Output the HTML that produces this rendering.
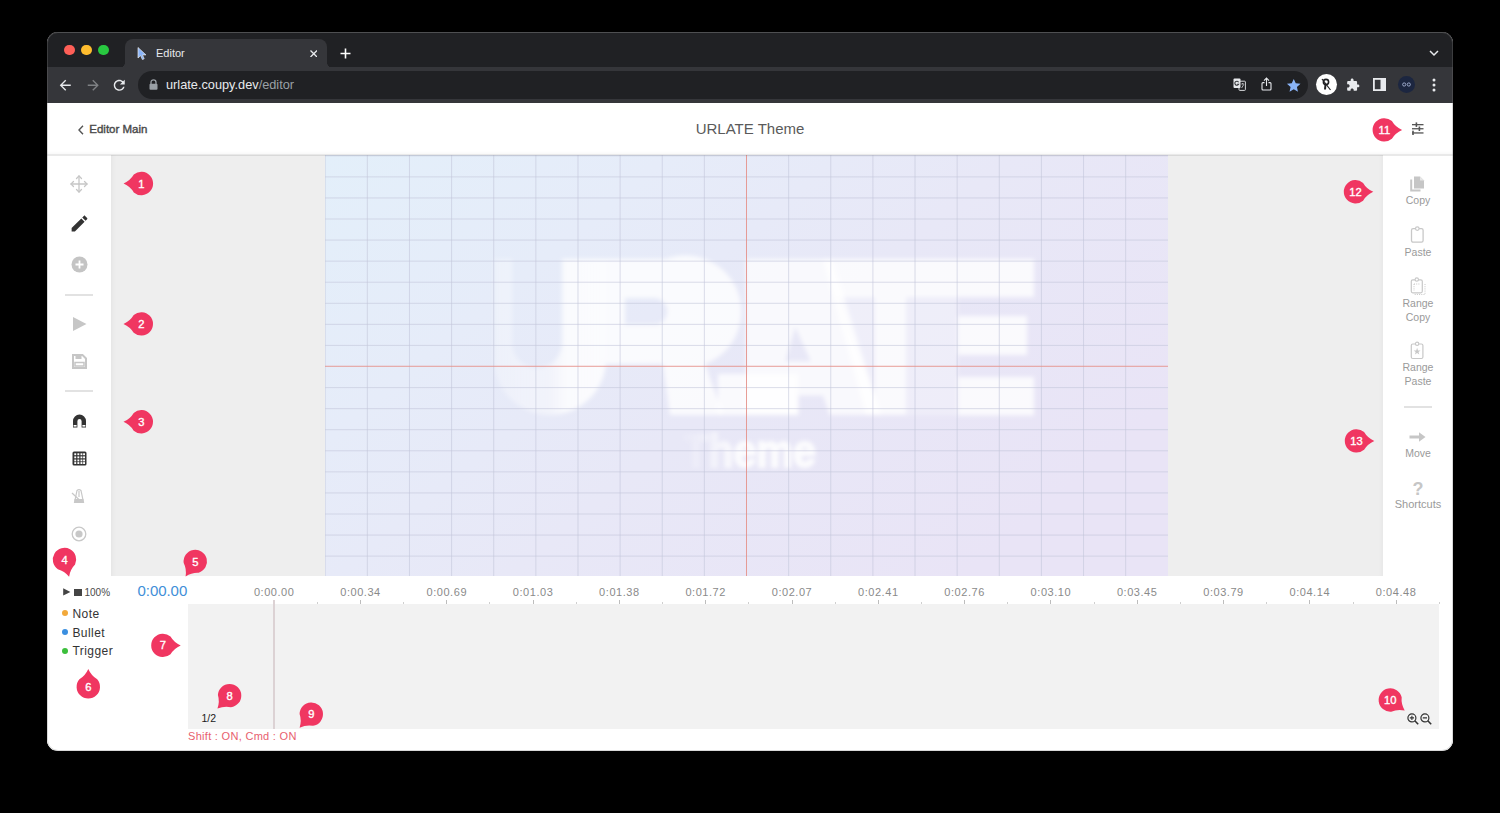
<!DOCTYPE html>
<html><head><meta charset="utf-8">
<style>
*{margin:0;padding:0;box-sizing:border-box}
html,body{width:1500px;height:813px;background:#000;overflow:hidden;font-family:"Liberation Sans",sans-serif}
.abs{position:absolute}
#win{position:absolute;left:47px;top:32px;width:1406px;height:718.5px;border-radius:11px;overflow:hidden;background:#fff}
#titlebar{position:absolute;left:0;top:0;width:1406px;height:35px;background:#202124}
#tab{position:absolute;left:78px;top:7px;width:202px;height:30px;background:#35363a;border-radius:8px 8px 0 0}
#toolbar{position:absolute;left:0;top:35px;width:1406px;height:36px;background:#35363a}
#omni{position:absolute;left:91px;top:4px;width:1170px;height:28px;border-radius:14px;background:#202124}
#header{position:absolute;left:0;top:71px;width:1406px;height:52px;background:#fff}
#lefttb{position:absolute;left:0;top:123px;width:64px;height:421px;background:#fff;z-index:2}
#stage{position:absolute;left:64px;top:123px;width:1272px;height:421px;z-index:2;background:#eeeeee;box-shadow:inset 5px 0 5px -4px rgba(0,0,0,0.05), inset -5px 0 5px -4px rgba(0,0,0,0.04)}
#canvas{position:absolute;left:214px;top:0;width:843px;height:421px;overflow:hidden;
  background:linear-gradient(90deg,#e4eef9 0%,#e7e9f7 50%,#e9e5f6 100%)}
#righttb{position:absolute;left:1336px;top:123px;width:70px;height:421px;background:#fff;z-index:2}
#timeline{position:absolute;left:0;top:543px;width:1406px;height:175px;background:#fff}
.tl{width:10.8px;height:10.8px;border-radius:50%}
.flare{position:absolute;bottom:0;width:8px;height:8px}
.flare.l{left:-8px;background:radial-gradient(circle at 0 0,transparent 8px,#35363a 8.5px)}
.flare.r{right:-8px;background:radial-gradient(circle at 100% 0,transparent 8px,#35363a 8.5px)}
.lbl{position:absolute;left:0;width:70px;text-align:center;font-size:10.5px;line-height:13px;color:#9a9a9a;white-space:nowrap}
.rl{position:absolute;top:11px;width:60px;text-align:center;font-size:11px;line-height:12px;color:#8a8a8a;letter-spacing:0.55px;white-space:nowrap}
.dot{width:6px;height:6px;border-radius:50%}
.leg{position:absolute;left:25.4px;font-size:12px;line-height:14px;color:#333;letter-spacing:0.45px}
.mk{position:absolute;width:23px;height:23px}
.mk i{position:absolute;left:0;top:0;width:23px;height:23px;background:#ee3860;border-radius:50% 50% 50% 0}
.mk b{position:absolute;left:0;top:0;width:23px;height:23px;line-height:23px;text-align:center;color:#fff;font-size:13px;font-weight:normal}
</style></head><body>
<div id="win">
  <div id="titlebar">
    <div class="abs" style="left:0;top:0;width:1406px;height:1px;background:#3a3b3e"></div>
    <div class="abs tl" style="left:17.3px;top:12.7px;background:#fe5f57"></div>
    <div class="abs tl" style="left:34.2px;top:12.7px;background:#febc2e"></div>
    <div class="abs tl" style="left:51px;top:12.7px;background:#28c840"></div>
    <div id="tab">
      <div class="flare l"></div><div class="flare r"></div>
      <svg class="abs" style="left:12px;top:8px" width="10" height="13" viewBox="0 0 10 13"><path d="M1 0.5 L1 11 L3.6 8.6 L5.4 12.6 L7.2 11.8 L5.5 7.9 L9 7.9 Z" fill="#8ab4f8" stroke="#e8eaed" stroke-width="0.7"/></svg>
      <div class="abs" style="left:31px;top:7px;font-size:11px;line-height:14px;color:#e8eaed">Editor</div>
      <svg class="abs" style="left:184.6px;top:10.5px" width="7.5" height="7.5" viewBox="0 0 7.5 7.5"><path d="M0.5 0.5 L7 7 M7 0.5 L0.5 7" stroke="#e8eaed" stroke-width="1.3"/></svg>
    </div>
    <svg class="abs" style="left:292.8px;top:15.8px" width="11" height="11" viewBox="0 0 11 11"><path d="M5.5 0.5 V10.5 M0.5 5.5 H10.5" stroke="#ffffff" stroke-width="1.6"/></svg>
    <svg class="abs" style="left:1382px;top:18px" width="10" height="7" viewBox="0 0 10 7"><path d="M1 1 L5 5 L9 1" stroke="#e8eaed" stroke-width="1.5" fill="none"/></svg>
  </div>
  <div id="toolbar">
    <svg class="abs" style="left:9.8px;top:9.6px" width="16.5" height="16.5" viewBox="0 0 24 24"><path d="M20 11H7.83l5.59-5.59L12 4l-8 8 8 8 1.41-1.41L7.83 13H20v-2z" fill="#e8eaed"/></svg>
    <svg class="abs" style="left:37.5px;top:9.6px" width="16.5" height="16.5" viewBox="0 0 24 24"><path d="M4 11h12.17l-5.59-5.59L12 4l8 8-8 8-1.41-1.41L16.17 13H4v-2z" fill="#7f8184"/></svg>
    <svg class="abs" style="left:64px;top:9.6px" width="16.5" height="16.5" viewBox="0 0 24 24"><path d="M17.65 6.35C16.2 4.9 14.21 4 12 4c-4.42 0-7.99 3.58-7.99 8s3.57 8 7.99 8c3.73 0 6.84-2.550 7.73-6h-2.08c-.82 2.33-3.040 4-5.650 4-3.310 0-6-2.690-6-6s2.690-6 6-6c1.660 0 3.140.69 4.220 1.780L13 11h7V4l-2.350 2.350z" fill="#e8eaed"/></svg>
    <div id="omni">
      <svg class="abs" style="left:11px;top:8px" width="9" height="11" viewBox="0 0 9 11"><path d="M2 5 V3.3 A2.5 2.5 0 0 1 7 3.3 V5" stroke="#9aa0a6" stroke-width="1.3" fill="none"/><rect x="0.5" y="4.8" width="8" height="6" rx="1" fill="#9aa0a6"/></svg>
      <div class="abs" style="left:28px;top:6px;font-size:12.75px;line-height:16px;color:#e8eaed;white-space:nowrap">urlate.coupy.dev<span style="color:#9aa0a6">/editor</span></div>
    </div>
    <!-- right icons -->
    <svg class="abs" style="left:1186px;top:11px" width="13" height="13" viewBox="0 0 13 13"><rect x="6" y="3.2" width="6.4" height="9.2" rx="0.8" fill="none" stroke="#d5d7da" stroke-width="1"/><rect x="0.5" y="0.5" width="7" height="9.5" rx="1" fill="#e8eaed"/><path d="M5.6 4.2 A2 2 0 1 0 5.6 6.2 H4.2" fill="none" stroke="#35363a" stroke-width="1.1"/><path d="M8.3 6 H11 M9.6 5 V6 M8.6 10 L10.8 6.5" stroke="#d5d7da" stroke-width="0.8" fill="none"/></svg>
    <svg class="abs" style="left:1214px;top:10px" width="11" height="14" viewBox="0 0 11 14"><path d="M5.5 9 V1.2 M3 3.6 L5.5 1 L8 3.6" stroke="#e8eaed" stroke-width="1.1" fill="none"/><path d="M3.5 5.6 H2 Q1 5.6 1 6.6 V12 Q1 13 2 13 H9 Q10 13 10 12 V6.6 Q10 5.6 9 5.6 H7.5" stroke="#e8eaed" stroke-width="1.1" fill="none"/></svg>
    <svg class="abs" style="left:1238.5px;top:10.5px" width="15.5" height="15.5" viewBox="0 0 24 24"><path d="M12 1.5 L15.1 8.3 L22.5 9 L16.9 14 L18.5 21.3 L12 17.5 L5.5 21.3 L7.1 14 L1.5 9 L8.9 8.3 Z" fill="#8ab4f8"/></svg>
    <div class="abs" style="left:1269px;top:7px;width:21px;height:21px;border-radius:50%;background:#fff"></div>
    <svg class="abs" style="left:1272px;top:10px" width="15" height="15" viewBox="0 0 15 15"><circle cx="7" cy="5" r="2.6" fill="none" stroke="#202124" stroke-width="1.6"/><path d="M6.5 7.5 L6 12.5" stroke="#202124" stroke-width="2"/><path d="M3 2 L11.5 13" stroke="#202124" stroke-width="1.2"/></svg>
    <svg class="abs" style="left:1299px;top:11px" width="14" height="14" viewBox="0 0 24 24"><path d="M20.5 11H19V7c0-1.1-.9-2-2-2h-4V3.5C13 2.1 11.9 1 10.5 1S8 2.1 8 3.5V5H4c-1.1 0-2 .9-2 2v3.8h1.5c1.5 0 2.7 1.2 2.7 2.7S5 16.2 3.5 16.2H2V20c0 1.1.9 2 2 2h3.8v-1.5c0-1.5 1.2-2.7 2.7-2.7s2.7 1.2 2.7 2.7V22H17c1.1 0 2-.9 2-2v-4h1.5c1.4 0 2.5-1.1 2.5-2.5S21.9 11 20.5 11z" fill="#e8eaed"/></svg>
    <svg class="abs" style="left:1326px;top:11px" width="13" height="13" viewBox="0 0 13 13"><rect x="0.9" y="0.9" width="11.2" height="11.2" fill="none" stroke="#e8eaed" stroke-width="1.8"/><rect x="7.5" y="1" width="4.6" height="11" fill="#e8eaed"/></svg>
    <div class="abs" style="left:1351px;top:9px;width:17px;height:17px;border-radius:50%;background:#1c2640"></div>
    <svg class="abs" style="left:1355px;top:15px" width="9" height="5" viewBox="0 0 9 5"><circle cx="2.2" cy="2.5" r="1.6" fill="none" stroke="#9aa7c8" stroke-width="1"/><circle cx="6.8" cy="2.5" r="1.6" fill="none" stroke="#9aa7c8" stroke-width="1"/></svg>
    <svg class="abs" style="left:1385px;top:11px" width="4" height="14" viewBox="0 0 4 14"><circle cx="2" cy="2" r="1.5" fill="#e8eaed"/><circle cx="2" cy="7" r="1.5" fill="#e8eaed"/><circle cx="2" cy="12" r="1.5" fill="#e8eaed"/></svg>
  </div>
  <div id="header">
    <svg class="abs" style="left:30.7px;top:21.7px" width="6" height="10" viewBox="0 0 6 10"><path d="M5 0.8 L1 5 L5 9.2" stroke="#555" stroke-width="1.4" fill="none"/></svg>
    <div class="abs" style="left:42.3px;top:19px;font-size:11.5px;line-height:14px;color:#4a4a4a;-webkit-text-stroke:0.4px #4a4a4a;white-space:nowrap">Editor Main</div>
    <div class="abs" style="left:0;top:17px;width:1406px;text-align:center;font-size:15px;line-height:18px;color:#5a5a5a;letter-spacing:0px">URLATE Theme</div>
    <svg class="abs" style="left:1364px;top:19px" width="13" height="13" viewBox="0 0 13 13" fill="#555">
      <rect x="1" y="2" width="11.5" height="1.3"/><rect x="1" y="6.1" width="11.5" height="1.3"/><rect x="1" y="10.3" width="11.5" height="1.3"/>
      <rect x="4.6" y="0.4" width="1.6" height="4.5" fill="#555"/><rect x="7.6" y="4.5" width="1.6" height="4.5"/><rect x="1.2" y="8.7" width="1.6" height="4.5"/>
    </svg>
  </div>
  <div id="lefttb">
    <!-- move -->
    <svg class="abs" style="left:23px;top:20px" width="18" height="18" viewBox="0 0 18 18" fill="none" stroke="#c6c6c6" stroke-width="1.3" stroke-linecap="round" stroke-linejoin="round">
      <path d="M9 1 V17 M1 9 H17"/><path d="M6.5 3.5 L9 1 L11.5 3.5 M6.5 14.5 L9 17 L11.5 14.5 M3.5 6.5 L1 9 L3.5 11.5 M14.5 6.5 L17 9 L14.5 11.5"/>
    </svg>
    <!-- pencil -->
    <svg class="abs" style="left:21.5px;top:57.5px" width="21" height="21" viewBox="0 0 24 24"><path d="M3 17.25V21h3.75L17.81 9.94l-3.75-3.75L3 17.25zM20.71 7.04c.39-.39.39-1.02 0-1.41l-2.34-2.34c-.39-.39-1.02-.39-1.41 0l-1.83 1.83 3.75 3.75 1.83-1.83z" fill="#333"/></svg>
    <!-- plus circle -->
    <svg class="abs" style="left:24px;top:101px" width="17" height="17" viewBox="0 0 17 17"><circle cx="8.5" cy="8.5" r="8" fill="#c4c4c4"/><path d="M8.5 4.5 V12.5 M4.5 8.5 H12.5" stroke="#fff" stroke-width="1.8"/></svg>
    <div class="abs" style="left:18px;top:139px;width:28px;height:1.5px;background:#e2e2e2"></div>
    <!-- play -->
    <svg class="abs" style="left:25px;top:161px" width="15" height="16" viewBox="0 0 15 16"><path d="M1 1 L14.5 8 L1 15 Z" fill="#c6c6c6"/></svg>
    <!-- save -->
    <svg class="abs" style="left:25px;top:199px" width="15" height="15" viewBox="0 0 15 15"><path d="M1 1 H10.5 L14 4.5 V14 H1 Z" fill="none" stroke="#c6c6c6" stroke-width="2"/><rect x="3.5" y="1" width="6" height="4" fill="#c6c6c6"/><rect x="3" y="8.5" width="9" height="3.5" fill="none" stroke="#c6c6c6" stroke-width="1.5"/></svg>
    <div class="abs" style="left:18px;top:235px;width:28px;height:1.5px;background:#e2e2e2"></div>
    <!-- magnet -->
    <svg class="abs" style="left:25px;top:259px" width="15" height="14" viewBox="0 0 15 14"><path d="M1 13.5 V7 A6.5 6.5 0 0 1 14 7 V13.5 H9.6 V7.2 A2.1 2.1 0 0 0 5.4 7.2 V13.5 Z" fill="#333"/><rect x="1.6" y="11" width="3" height="1.6" fill="#fff"/><rect x="10.4" y="11" width="3" height="1.6" fill="#fff"/></svg>
    <!-- grid -->
    <svg class="abs" style="left:25px;top:296px" width="15" height="15" viewBox="0 0 15 15"><rect x="0.5" y="0.5" width="14" height="14" rx="1.5" fill="#333"/>
      <g fill="#fff"><rect x="2.3" y="2.3" width="1.9" height="1.9"/><rect x="5.4" y="2.3" width="1.9" height="1.9"/><rect x="8.5" y="2.3" width="1.9" height="1.9"/><rect x="11.1" y="2.3" width="1.9" height="1.9"/>
      <rect x="2.3" y="5.4" width="1.9" height="1.9"/><rect x="5.4" y="5.4" width="1.9" height="1.9"/><rect x="8.5" y="5.4" width="1.9" height="1.9"/><rect x="11.1" y="5.4" width="1.9" height="1.9"/>
      <rect x="2.3" y="8.5" width="1.9" height="1.9"/><rect x="5.4" y="8.5" width="1.9" height="1.9"/><rect x="8.5" y="8.5" width="1.9" height="1.9"/><rect x="11.1" y="8.5" width="1.9" height="1.9"/>
      <rect x="2.3" y="11.1" width="1.9" height="1.9"/><rect x="5.4" y="11.1" width="1.9" height="1.9"/><rect x="8.5" y="11.1" width="1.9" height="1.9"/><rect x="11.1" y="11.1" width="1.9" height="1.9"/></g></svg>
    <!-- metronome -->
    <svg class="abs" style="left:24px;top:333px" width="16" height="16" viewBox="0 0 16 16" fill="none" stroke="#c8c8c8" stroke-width="1.2">
      <path d="M3.5 14.5 L6 2.5 Q8 0.8 10 2.5 L12.5 14.5 Z"/><path d="M1 5 L9 12.5" /><path d="M8 3 V9"/><rect x="3.5" y="11" width="9" height="3.5" fill="#c8c8c8" stroke="none"/>
    </svg>
    <!-- record -->
    <svg class="abs" style="left:24px;top:371px" width="16" height="16" viewBox="0 0 16 16"><circle cx="8" cy="8" r="6.8" fill="none" stroke="#c8c8c8" stroke-width="1.3"/><circle cx="8" cy="8" r="3.6" fill="#c8c8c8"/></svg>
  </div>
  <div id="stage">
    <div id="canvas">
      <svg width="843" height="421" viewBox="325 155 843 421" style="position:absolute;left:0;top:0">
        <defs>
          <linearGradient id="bg" x1="0" y1="0" x2="1" y2="0.6">
            <stop offset="0" stop-color="#e3effa"/><stop offset="0.3" stop-color="#e6ecf9"/><stop offset="0.6" stop-color="#e8e8f7"/><stop offset="1" stop-color="#e9e4f6"/>
          </linearGradient>
          <linearGradient id="fade" gradientUnits="userSpaceOnUse" x1="494" y1="0" x2="606" y2="0">
            <stop offset="0" stop-color="#fff" stop-opacity="0.3"/><stop offset="0.5" stop-color="#fff" stop-opacity="0.45"/><stop offset="0.65" stop-color="#fff" stop-opacity="0.8"/><stop offset="1" stop-color="#fff" stop-opacity="0.85"/>
          </linearGradient>
          <linearGradient id="fade2" gradientUnits="userSpaceOnUse" x1="684" y1="0" x2="740" y2="0">
            <stop offset="0" stop-color="#fff" stop-opacity="0.05"/><stop offset="0.5" stop-color="#fff" stop-opacity="0.4"/><stop offset="1" stop-color="#fff" stop-opacity="0.85"/>
          </linearGradient>
          <filter id="bl" x="-5%" y="-5%" width="110%" height="110%"><feGaussianBlur stdDeviation="2"/></filter><linearGradient id="topfade" x1="0" y1="0" x2="0" y2="1"><stop offset="0" stop-color="#fff" stop-opacity="0.3"/><stop offset="1" stop-color="#fff" stop-opacity="0"/></linearGradient><filter id="bl2" x="-50%" y="-50%" width="200%" height="200%"><feGaussianBlur stdDeviation="40"/></filter>
        </defs>
        <rect x="325" y="155" width="843" height="421" fill="url(#bg)"/>
        <g filter="url(#bl)">
          <path fill="url(#fade)" fill-rule="evenodd" d="M494,259 H606 V359 A56,56 0 0 1 494,359 Z M512,259 V343 A25,25 0 0 0 562,343 V259 Z"/>
          <g fill="#fff" fill-opacity="0.8">
          <path fill-rule="evenodd" d="M606,259 H665.5 A52.5,52.5 0 0 1 705,364 L723,415 H670 L663,364 H606 Z M625,298 H654 A13.3,13.3 0 0 1 654,324.6 H625 Z"/>
          <path d="M718,374 H798 V415 H718 Z"/>
          
          <path fill-opacity="0.75" fill-rule="evenodd" d="M746,259 H823 L881,415 H829.6 L823,395.6 H798.6 V415 H746 Z M795.3,327 L810.8,361.3 H785.3 Z"/>
          <path d="M823,259 L832,259 L881,415 H866 Z"/>
          <path d="M823,259 H1034 V297 H906 V415 H875 V297 H835 Z"/>
          <path d="M958,316 H1027 V355 H958 Z M958,377 H1034 V415.5 H958 Z"/>
          <path fill-opacity="0.28" d="M906,297 H958 V415.5 H906 Z"/>
          <path fill-opacity="0.3" d="M838,297 H875 V415 H872 Z"/>
          </g>
          <text x="683" y="466.5" font-family="Liberation Sans" font-weight="700" font-size="46" textLength="133" lengthAdjust="spacingAndGlyphs" fill="url(#fade2)" stroke="url(#fade2)" stroke-width="2">Theme</text>
        </g>
        <g fill="#c3c7da" fill-opacity="0.6"><rect x="324.70" y="155" width="1" height="422" /><rect x="366.83" y="155" width="1" height="422" /><rect x="408.96" y="155" width="1" height="422" /><rect x="451.09" y="155" width="1" height="422" /><rect x="493.22" y="155" width="1" height="422" /><rect x="535.35" y="155" width="1" height="422" /><rect x="577.48" y="155" width="1" height="422" /><rect x="619.61" y="155" width="1" height="422" /><rect x="661.74" y="155" width="1" height="422" /><rect x="703.87" y="155" width="1" height="422" /><rect x="788.13" y="155" width="1" height="422" /><rect x="830.26" y="155" width="1" height="422" /><rect x="872.39" y="155" width="1" height="422" /><rect x="914.52" y="155" width="1" height="422" /><rect x="956.65" y="155" width="1" height="422" /><rect x="998.78" y="155" width="1" height="422" /><rect x="1040.91" y="155" width="1" height="422" /><rect x="1083.04" y="155" width="1" height="422" /><rect x="1125.17" y="155" width="1" height="422" /><rect x="325" y="155.30" width="843" height="1" /><rect x="325" y="176.37" width="843" height="1" /><rect x="325" y="197.44" width="843" height="1" /><rect x="325" y="218.51" width="843" height="1" /><rect x="325" y="239.58" width="843" height="1" /><rect x="325" y="260.65" width="843" height="1" /><rect x="325" y="281.72" width="843" height="1" /><rect x="325" y="302.79" width="843" height="1" /><rect x="325" y="323.86" width="843" height="1" /><rect x="325" y="344.93" width="843" height="1" /><rect x="325" y="387.07" width="843" height="1" /><rect x="325" y="408.14" width="843" height="1" /><rect x="325" y="429.21" width="843" height="1" /><rect x="325" y="450.28" width="843" height="1" /><rect x="325" y="471.35" width="843" height="1" /><rect x="325" y="492.42" width="843" height="1" /><rect x="325" y="513.49" width="843" height="1" /><rect x="325" y="534.56" width="843" height="1" /><rect x="325" y="555.63" width="843" height="1" /><rect x="325" y="576.70" width="843" height="1" /></g>
        <rect x="746.1" y="155" width="0.9" height="422" fill="#e5928b"/>
        <rect x="325" y="365.8" width="843" height="0.9" fill="#e5928b"/>
      </svg>
    </div>
  </div>
  <div class="abs" style="z-index:3;left:0;top:119px;width:1406px;height:3px;background:linear-gradient(180deg,rgba(0,0,0,0),rgba(0,0,0,0.025))"></div>
  <div class="abs" style="z-index:3;left:0;top:122px;width:1406px;height:1.5px;background:rgba(0,0,0,0.085)"></div>
  <div id="righttb">
    <!-- copy icon page x1411-1424 y177-191.6 -->
    <svg class="abs" style="left:27px;top:21px" width="15" height="16" viewBox="0 0 15 16"><path d="M1.2 3.5 V14.6 H10.5" fill="none" stroke="#c6c6c6" stroke-width="2"/><path d="M4 0.5 H10 L14 4.5 V12.5 H4 Z" fill="#c6c6c6"/><path d="M10 0.5 V4.5 H14" fill="#e6e6e6"/></svg>
    <div class="lbl" style="top:39px">Copy</div>
    <!-- paste -->
    <svg class="abs" style="left:27px;top:71px" width="15" height="17" viewBox="0 0 15 17"><rect x="1.5" y="2.6" width="11.6" height="13.6" rx="1.6" fill="none" stroke="#c8c8c8" stroke-width="1.3"/><circle cx="7.3" cy="2.6" r="1.8" fill="#fff" stroke="#c8c8c8" stroke-width="1.2"/></svg>
    <div class="lbl" style="top:91px">Paste</div>
    <!-- range copy -->
    <svg class="abs" style="left:27px;top:122px" width="17" height="19" viewBox="0 0 17 19"><rect x="1.3" y="2.8" width="11" height="13" rx="1.5" fill="none" stroke="#c8c8c8" stroke-width="1.2"/><circle cx="6.8" cy="2.6" r="1.7" fill="#fff" stroke="#c8c8c8" stroke-width="1.1"/><path d="M4 7 H10 M15 7 V17.5 H4.5 M4 7 V14" stroke="#c8c8c8" stroke-width="1" stroke-dasharray="1 1.2" fill="none"/></svg>
    <div class="lbl" style="top:142px;line-height:13.5px">Range<br>Copy</div>
    <!-- range paste -->
    <svg class="abs" style="left:27px;top:186px" width="15" height="19" viewBox="0 0 15 19"><rect x="1.3" y="3" width="11.6" height="14.5" rx="1.5" fill="none" stroke="#c8c8c8" stroke-width="1.2"/><circle cx="7.1" cy="2.8" r="1.7" fill="#fff" stroke="#c8c8c8" stroke-width="1.1"/><path d="M7.1 6.8 L8 9.4 L10.6 9.4 L8.5 11 L9.3 13.6 L7.1 12 L4.9 13.6 L5.7 11 L3.6 9.4 L6.2 9.4 Z" fill="#c8c8c8"/></svg>
    <div class="lbl" style="top:206px;line-height:13.5px">Range<br>Paste</div>
    <div class="abs" style="left:21px;top:251px;width:28px;height:1.5px;background:#e2e2e2"></div>
    <!-- move arrow page x1409.4-1425.4 y432.2-441.5 -->
    <svg class="abs" style="left:26px;top:277px" width="17" height="10" viewBox="0 0 17 10"><path d="M0.5 5 H11" stroke="#c6c6c6" stroke-width="3"/><path d="M10 0.3 L16.5 5 L10 9.7 Z" fill="#c6c6c6"/></svg>
    <div class="lbl" style="top:292px">Move</div>
    <div class="abs" style="left:0;top:323.5px;width:70px;text-align:center;font-size:18px;line-height:20px;font-weight:bold;color:#c6c6c6">?</div>
    <div class="lbl" style="top:343px;font-size:11px">Shortcuts</div>
  </div>
  <div id="timeline">
    <svg class="abs" style="left:16px;top:13px" width="8" height="8" viewBox="0 0 8 8"><path d="M0.2 0.2 L7.4 3.9 L0.2 7.6 Z" fill="#444"/></svg>
    <div class="abs" style="left:27.2px;top:13.5px;width:7.6px;height:7.3px;background:#444"></div>
    <div class="abs" style="left:37.5px;top:11.8px;font-size:10px;line-height:12px;color:#4a4a4a;letter-spacing:0px">100%</div>
    <div class="abs" style="left:90.5px;top:6.5px;font-size:15px;line-height:17px;color:#3f8fd8;letter-spacing:-0.05px">0:00.00</div>
    <div class="rl" style="left:197.2px">0:00.00</div><div class="rl" style="left:283.5px">0:00.34</div><div class="rl" style="left:369.8px">0:00.69</div><div class="rl" style="left:456.1px">0:01.03</div><div class="rl" style="left:542.4px">0:01.38</div><div class="rl" style="left:628.7px">0:01.72</div><div class="rl" style="left:715.0px">0:02.07</div><div class="rl" style="left:801.3px">0:02.41</div><div class="rl" style="left:887.6px">0:02.76</div><div class="rl" style="left:973.9px">0:03.10</div><div class="rl" style="left:1060.2px">0:03.45</div><div class="rl" style="left:1146.5px">0:03.79</div><div class="rl" style="left:1232.8px">0:04.14</div><div class="rl" style="left:1319.1px">0:04.48</div>
    <div class="abs" style="left:226.7px;top:25.4px;width:1px;height:3.6px;background:#bdbdbd"></div><div class="abs" style="left:269.8px;top:26.9px;width:1px;height:2.1px;background:#cfcfcf"></div><div class="abs" style="left:313.0px;top:25.4px;width:1px;height:3.6px;background:#bdbdbd"></div><div class="abs" style="left:356.1px;top:26.9px;width:1px;height:2.1px;background:#cfcfcf"></div><div class="abs" style="left:399.3px;top:25.4px;width:1px;height:3.6px;background:#bdbdbd"></div><div class="abs" style="left:442.4px;top:26.9px;width:1px;height:2.1px;background:#cfcfcf"></div><div class="abs" style="left:485.6px;top:25.4px;width:1px;height:3.6px;background:#bdbdbd"></div><div class="abs" style="left:528.7px;top:26.9px;width:1px;height:2.1px;background:#cfcfcf"></div><div class="abs" style="left:571.9px;top:25.4px;width:1px;height:3.6px;background:#bdbdbd"></div><div class="abs" style="left:615.0px;top:26.9px;width:1px;height:2.1px;background:#cfcfcf"></div><div class="abs" style="left:658.2px;top:25.4px;width:1px;height:3.6px;background:#bdbdbd"></div><div class="abs" style="left:701.4px;top:26.9px;width:1px;height:2.1px;background:#cfcfcf"></div><div class="abs" style="left:744.5px;top:25.4px;width:1px;height:3.6px;background:#bdbdbd"></div><div class="abs" style="left:787.6px;top:26.9px;width:1px;height:2.1px;background:#cfcfcf"></div><div class="abs" style="left:830.8px;top:25.4px;width:1px;height:3.6px;background:#bdbdbd"></div><div class="abs" style="left:873.9px;top:26.9px;width:1px;height:2.1px;background:#cfcfcf"></div><div class="abs" style="left:917.1px;top:25.4px;width:1px;height:3.6px;background:#bdbdbd"></div><div class="abs" style="left:960.2px;top:26.9px;width:1px;height:2.1px;background:#cfcfcf"></div><div class="abs" style="left:1003.4px;top:25.4px;width:1px;height:3.6px;background:#bdbdbd"></div><div class="abs" style="left:1046.5px;top:26.9px;width:1px;height:2.1px;background:#cfcfcf"></div><div class="abs" style="left:1089.7px;top:25.4px;width:1px;height:3.6px;background:#bdbdbd"></div><div class="abs" style="left:1132.9px;top:26.9px;width:1px;height:2.1px;background:#cfcfcf"></div><div class="abs" style="left:1176.0px;top:25.4px;width:1px;height:3.6px;background:#bdbdbd"></div><div class="abs" style="left:1219.2px;top:26.9px;width:1px;height:2.1px;background:#cfcfcf"></div><div class="abs" style="left:1262.3px;top:25.4px;width:1px;height:3.6px;background:#bdbdbd"></div><div class="abs" style="left:1305.5px;top:26.9px;width:1px;height:2.1px;background:#cfcfcf"></div><div class="abs" style="left:1348.6px;top:25.4px;width:1px;height:3.6px;background:#bdbdbd"></div><div class="abs" style="left:1391.8px;top:26.9px;width:1px;height:2.1px;background:#cfcfcf"></div>
    <div class="abs" style="left:141px;top:29px;width:1251px;height:124.5px;background:#f2f2f2"></div>
    <div class="abs" style="left:226px;top:25px;width:2px;height:128.5px;background:#dcd2d4"></div>
    <div class="abs dot" style="left:14.9px;top:35.4px;background:#f2a93b"></div>
    <div class="abs leg" style="top:32px">Note</div>
    <div class="abs dot" style="left:14.9px;top:54.1px;background:#3b8fe0"></div>
    <div class="abs leg" style="top:50.7px">Bullet</div>
    <div class="abs dot" style="left:14.9px;top:72.8px;background:#3cbf3c"></div>
    <div class="abs leg" style="top:69.4px">Trigger</div>
    <div class="abs" style="left:154.5px;top:136.8px;font-size:10.5px;line-height:12px;color:#1a1a1a">1/2</div>
    <div class="abs" style="left:141px;top:154.8px;font-size:11px;line-height:12px;color:#e8606e;letter-spacing:0.3px;white-space:nowrap">Shift : ON, Cmd : ON</div>
    <svg class="abs" style="left:1359.7px;top:137.7px" width="12" height="12" viewBox="0 0 12 12" fill="none" stroke="#333" stroke-width="1.2"><circle cx="4.9" cy="4.9" r="4"/><path d="M7.8 7.8 L11.2 11.2" stroke-width="1.6"/><path d="M4.9 2.8 V7 M2.8 4.9 H7" stroke-width="1.1"/></svg>
    <svg class="abs" style="left:1372.7px;top:137.7px" width="12" height="12" viewBox="0 0 12 12" fill="none" stroke="#333" stroke-width="1.2"><circle cx="4.9" cy="4.9" r="4"/><path d="M7.8 7.8 L11.2 11.2" stroke-width="1.6"/><path d="M2.8 4.9 H7" stroke-width="1.1"/></svg>
  </div>
</div>
<div class="abs" style="z-index:9;left:47px;top:32px;width:1406px;height:718.5px;border:1px solid rgba(125,125,125,0.3);border-radius:11px;pointer-events:none"></div>
<svg class="abs" style="left:0;top:0;z-index:10" width="1500" height="813" viewBox="0 0 1500 813"><g transform="translate(141.4,183.5)"><path transform="rotate(180)" d="M17.8,0 Q11,-3 7.6,-8.9 A11.7,11.7 0 1 0 7.6,8.9 Q11,3 17.8,0 Z" fill="#f03661"/><text x="0" y="4" text-anchor="middle" font-family="Liberation Sans" font-size="11.2" fill="#fff" stroke="#fff" stroke-width="0.35">1</text></g><g transform="translate(141.3,323.9)"><path transform="rotate(180)" d="M17.8,0 Q11,-3 7.6,-8.9 A11.7,11.7 0 1 0 7.6,8.9 Q11,3 17.8,0 Z" fill="#f03661"/><text x="0" y="4" text-anchor="middle" font-family="Liberation Sans" font-size="11.2" fill="#fff" stroke="#fff" stroke-width="0.35">2</text></g><g transform="translate(141.3,421.8)"><path transform="rotate(180)" d="M17.8,0 Q11,-3 7.6,-8.9 A11.7,11.7 0 1 0 7.6,8.9 Q11,3 17.8,0 Z" fill="#f03661"/><text x="0" y="4" text-anchor="middle" font-family="Liberation Sans" font-size="11.2" fill="#fff" stroke="#fff" stroke-width="0.35">3</text></g><g transform="translate(64.5,559.5)"><path transform="rotate(75)" d="M17.8,0 Q11,-3 7.6,-8.9 A11.7,11.7 0 1 0 7.6,8.9 Q11,3 17.8,0 Z" fill="#f03661"/><text x="0" y="4" text-anchor="middle" font-family="Liberation Sans" font-size="11.2" fill="#fff" stroke="#fff" stroke-width="0.35">4</text></g><g transform="translate(195.3,561.5)"><path transform="rotate(123)" d="M17.8,0 Q11,-3 7.6,-8.9 A11.7,11.7 0 1 0 7.6,8.9 Q11,3 17.8,0 Z" fill="#f03661"/><text x="0" y="4" text-anchor="middle" font-family="Liberation Sans" font-size="11.2" fill="#fff" stroke="#fff" stroke-width="0.35">5</text></g><g transform="translate(88.3,686.8)"><path transform="rotate(270)" d="M17.8,0 Q11,-3 7.6,-8.9 A11.7,11.7 0 1 0 7.6,8.9 Q11,3 17.8,0 Z" fill="#f03661"/><text x="0" y="4" text-anchor="middle" font-family="Liberation Sans" font-size="11.2" fill="#fff" stroke="#fff" stroke-width="0.35">6</text></g><g transform="translate(162.9,645.4)"><path transform="rotate(0)" d="M17.8,0 Q11,-3 7.6,-8.9 A11.7,11.7 0 1 0 7.6,8.9 Q11,3 17.8,0 Z" fill="#f03661"/><text x="0" y="4" text-anchor="middle" font-family="Liberation Sans" font-size="11.2" fill="#fff" stroke="#fff" stroke-width="0.35">7</text></g><g transform="translate(229.6,695.6)"><path transform="rotate(133)" d="M17.8,0 Q11,-3 7.6,-8.9 A11.7,11.7 0 1 0 7.6,8.9 Q11,3 17.8,0 Z" fill="#f03661"/><text x="0" y="4" text-anchor="middle" font-family="Liberation Sans" font-size="11.2" fill="#fff" stroke="#fff" stroke-width="0.35">8</text></g><g transform="translate(311.3,714.2)"><path transform="rotate(131)" d="M17.8,0 Q11,-3 7.6,-8.9 A11.7,11.7 0 1 0 7.6,8.9 Q11,3 17.8,0 Z" fill="#f03661"/><text x="0" y="4" text-anchor="middle" font-family="Liberation Sans" font-size="11.2" fill="#fff" stroke="#fff" stroke-width="0.35">9</text></g><g transform="translate(1390.3,700)"><path transform="rotate(36)" d="M17.8,0 Q11,-3 7.6,-8.9 A11.7,11.7 0 1 0 7.6,8.9 Q11,3 17.8,0 Z" fill="#f03661"/><text x="0" y="4" text-anchor="middle" font-family="Liberation Sans" font-size="11.2" fill="#fff" stroke="#fff" stroke-width="0.35">10</text></g><g transform="translate(1384.3,129.9)"><path transform="rotate(0)" d="M17.8,0 Q11,-3 7.6,-8.9 A11.7,11.7 0 1 0 7.6,8.9 Q11,3 17.8,0 Z" fill="#f03661"/><text x="0" y="4" text-anchor="middle" font-family="Liberation Sans" font-size="11.2" fill="#fff" stroke="#fff" stroke-width="0.35">11</text></g><g transform="translate(1355.5,191.8)"><path transform="rotate(0)" d="M17.8,0 Q11,-3 7.6,-8.9 A11.7,11.7 0 1 0 7.6,8.9 Q11,3 17.8,0 Z" fill="#f03661"/><text x="0" y="4" text-anchor="middle" font-family="Liberation Sans" font-size="11.2" fill="#fff" stroke="#fff" stroke-width="0.35">12</text></g><g transform="translate(1356.5,440.9)"><path transform="rotate(0)" d="M17.8,0 Q11,-3 7.6,-8.9 A11.7,11.7 0 1 0 7.6,8.9 Q11,3 17.8,0 Z" fill="#f03661"/><text x="0" y="4" text-anchor="middle" font-family="Liberation Sans" font-size="11.2" fill="#fff" stroke="#fff" stroke-width="0.35">13</text></g></svg>
</body></html>
